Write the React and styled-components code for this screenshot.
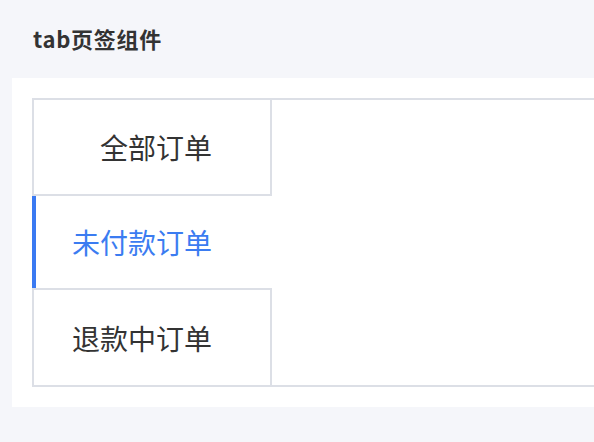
import React, { useState } from "react";
import styled, { createGlobalStyle } from "styled-components";

const GlobalStyle = createGlobalStyle`
  html, body {
    margin: 0;
    padding: 0;
    background: #f5f6fa;
    overflow: hidden;
  }
  body {
    font-family: "Noto Sans CJK SC", "Noto Sans", sans-serif;
  }
`;

const Page = styled.div`
  width: 594px;
  height: 442px;
  overflow: hidden;
  background: #f5f6fa;
`;

const Header = styled.div`
  height: 78px;
  display: flex;
  align-items: center;
  padding: 0 0 3px 33px;
  box-sizing: border-box;
`;

const Title = styled.h1`
  margin: 0;
  font-size: 22px;
  letter-spacing: 0.7px;
  font-weight: 700;
  color: #333333;
  line-height: 1;
`;

const Panel = styled.div`
  margin-left: 12px;
  width: 700px;
  background: #ffffff;
  padding: 20px;
  box-sizing: border-box;
`;

const Tabs = styled.div`
  display: flex;
  align-items: stretch;
`;

const TabList = styled.div`
  display: flex;
  flex-direction: column;
  width: 240px;
  flex-shrink: 0;
`;

const Tab = styled.div`
  box-sizing: border-box;
  height: ${(p) => p.$h}px;
  display: flex;
  align-items: center;
  justify-content: flex-end;
  padding-right: ${(p) => (p.$active ? 60 : 58)}px;
  font-size: 28px;
  color: ${(p) => (p.$active ? "#3b7cf1" : "#333333")};
  border: ${(p) => (p.$active ? "none" : "2px solid #dcdfe6")};
  border-left: ${(p) => (p.$active ? "4px solid #3a7af2" : "2px solid #dcdfe6")};
  background: #ffffff;
  cursor: pointer;
  white-space: nowrap;
`;

const Content = styled.div`
  flex: 1;
  border-top: 2px solid #dcdfe6;
  border-bottom: 2px solid #dcdfe6;
  box-sizing: border-box;
`;

const tabs = [
  { label: "全部订单", h: 98 },
  { label: "未付款订单", h: 92 },
  { label: "退款中订单", h: 99 },
];

export default function App() {
  const [active, setActive] = useState(1);
  return (
    <Page>
      <GlobalStyle />
      <Header>
        <Title>tab页签组件</Title>
      </Header>
      <Panel>
        <Tabs>
          <TabList>
            {tabs.map((t, i) => (
              <Tab
                key={t.label}
                $h={t.h}
                $active={i === active}
                onClick={() => setActive(i)}
              >
                {t.label}
              </Tab>
            ))}
          </TabList>
          <Content />
        </Tabs>
      </Panel>
    </Page>
  );
}
